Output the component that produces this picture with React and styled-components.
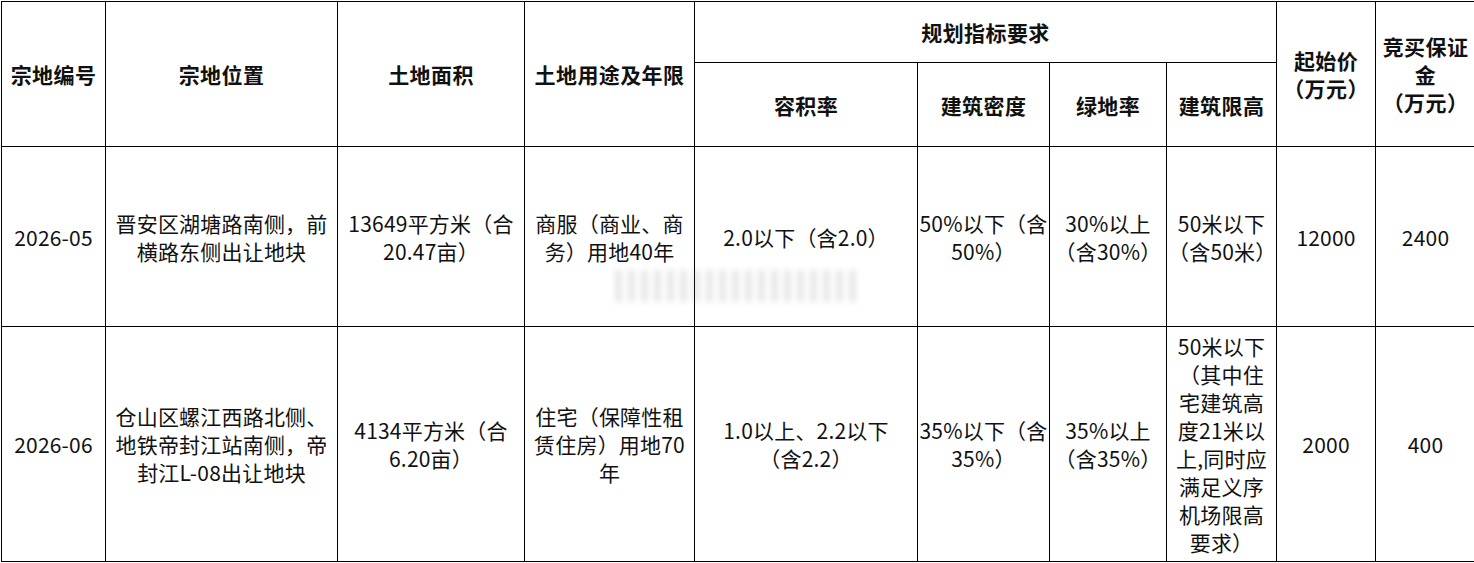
import React from "react";
import styled, { createGlobalStyle } from "styled-components";

const GlobalStyle = createGlobalStyle`
  html, body {
    margin: 0;
    padding: 0;
    background: #ffffff;
  }
  body {
    font-family: "Liberation Sans Narrow", "Noto Sans CJK SC", sans-serif;
    color: #111111;
  }
`;

const Page = styled.div`
  position: relative;
  width: 1474px;
  height: 563px;
  overflow: hidden;
  padding: 1px 0 0 1px;
  box-sizing: border-box;
`;

const Table = styled.table`
  width: 1474px;
  border-collapse: collapse;
  table-layout: fixed;
  border-top: 1px solid #dcdcdc;
  border-left: 1px solid #dcdcdc;
`;

const HeadCell = styled.th`
  border: 1px solid #000000;
  padding: 0 2px;
  text-align: center;
  vertical-align: middle;
  font-family: "Noto Sans CJK SC", sans-serif;
  font-weight: 700;
  font-size: 21px;
  letter-spacing: 0.4px;
  line-height: 28px;
  color: #111111;
  white-space: nowrap;
`;

const Cell = styled.td`
  border: 1px solid #000000;
  padding: 0 1px;
  text-align: center;
  vertical-align: middle;
  font-size: 21px;
  letter-spacing: 0.2px;
  line-height: 28px;
  font-weight: 400;
  color: #111111;
  white-space: nowrap;
`;

const Line = styled.span`
  display: block;
`;

const Watermark = styled.div`
  position: absolute;
  left: 616px;
  top: 270px;
  width: 244px;
  height: 32px;
  background: repeating-linear-gradient(
    90deg,
    rgba(120, 120, 120, 0.45) 0px,
    rgba(120, 120, 120, 0.45) 5px,
    rgba(255, 255, 255, 0) 5px,
    rgba(255, 255, 255, 0) 13px
  );
  filter: blur(3px);
  opacity: 0.55;
  pointer-events: none;
`;

const widths = [104, 232, 187, 170, 223, 132, 117, 110, 99, 100];

const Lines = ({ text }) =>
  text.map((t, i) => <Line key={i}>{t}</Line>);

const rows = [
  {
    h: 180,
    cells: [
      ["2026-05"],
      ["晋安区湖塘路南侧，前", "横路东侧出让地块"],
      ["13649平方米（合", "20.47亩）"],
      ["商服（商业、商", "务）用地40年"],
      ["2.0以下（含2.0）"],
      ["50%以下（含", "50%）"],
      ["30%以上", "（含30%）"],
      ["50米以下", "（含50米）"],
      ["12000"],
      ["2400"],
    ],
  },
  {
    h: 235,
    cells: [
      ["2026-06"],
      ["仓山区螺江西路北侧、", "地铁帝封江站南侧，帝", "封江L-08出让地块"],
      ["4134平方米（合", "6.20亩）"],
      ["住宅（保障性租", "赁住房）用地70", "年"],
      ["1.0以上、2.2以下", "（含2.2）"],
      ["35%以下（含", "35%）"],
      ["35%以上", "（含35%）"],
      [
        "50米以下",
        "（其中住",
        "宅建筑高",
        "度21米以",
        "上,同时应",
        "满足义序",
        "机场限高",
        "要求）",
      ],
      ["2000"],
      ["400"],
    ],
  },
];

export default function App() {
  return (
    <Page>
      <GlobalStyle />
      <Table>
        <colgroup>
          {widths.map((w, i) => (
            <col key={i} style={{ width: w }} />
          ))}
        </colgroup>
        <thead>
          <tr style={{ height: 61 }}>
            <HeadCell rowSpan={2}>宗地编号</HeadCell>
            <HeadCell rowSpan={2}>宗地位置</HeadCell>
            <HeadCell rowSpan={2}>土地面积</HeadCell>
            <HeadCell rowSpan={2}>土地用途及年限</HeadCell>
            <HeadCell colSpan={4}>规划指标要求</HeadCell>
            <HeadCell rowSpan={2}>
              <Lines text={["起始价", "（万元）"]} />
            </HeadCell>
            <HeadCell rowSpan={2}>
              <Lines text={["竞买保证", "金", "（万元）"]} />
            </HeadCell>
          </tr>
          <tr style={{ height: 84 }}>
            <HeadCell>容积率</HeadCell>
            <HeadCell>建筑密度</HeadCell>
            <HeadCell>绿地率</HeadCell>
            <HeadCell>建筑限高</HeadCell>
          </tr>
        </thead>
        <tbody>
          {rows.map((r, ri) => (
            <tr key={ri} style={{ height: r.h }}>
              {r.cells.map((c, ci) => (
                <Cell key={ci}>
                  <Lines text={c} />
                </Cell>
              ))}
            </tr>
          ))}
        </tbody>
      </Table>
      <Watermark />
    </Page>
  );
}
